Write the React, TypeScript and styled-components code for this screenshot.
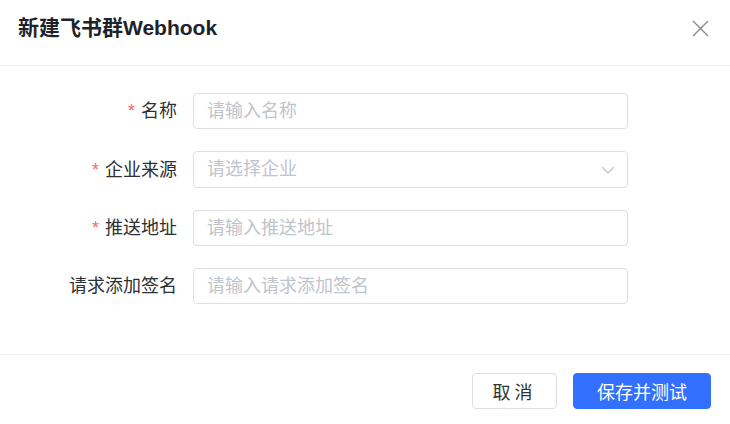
import React from "react";
import styled, { createGlobalStyle } from "styled-components";

const Global = createGlobalStyle`
  html, body { margin: 0; padding: 0; background: #fff; }
  body { font-family: "Liberation Sans", "Noto Sans CJK SC", sans-serif; }
  * { box-sizing: border-box; }
`;

const Dialog = styled.div`
  width: 730px;
  height: 424px;
  background: #fff;
  display: flex;
  flex-direction: column;
`;

const Header = styled.div`
  height: 66px;
  padding: 0 21px 9px 18px;
  display: flex;
  align-items: center;
  justify-content: space-between;
  border-bottom: 1px solid #ebedf0;
`;

const Title = styled.div`
  font-size: 21px;
  font-weight: 700;
  color: #1f2329;
  line-height: 24px;
`;

const Close = styled.button`
  width: 18px;
  height: 18px;
  padding: 0;
  border: none;
  background: transparent;
  display: flex;
  align-items: center;
  justify-content: center;
  color: #8a8a8a;
`;

const Body = styled.div`
  flex: 1;
  padding-top: 27px;
  display: flex;
  flex-direction: column;
  gap: 22px;
`;

const Row = styled.div`
  display: grid;
  grid-template-columns: 177px 435px;
  column-gap: 16px;
  align-items: center;
`;

const Label = styled.label`
  text-align: right;
  font-size: 18px;
  color: #2b2f36;
  line-height: 36px;
  white-space: nowrap;
`;

const Star = styled.span`
  color: #f56c6c;
  margin-right: 6px;
`;

const Field = styled.div<{ $h?: number }>`
  position: relative;
  height: ${(p) => p.$h ?? 36}px;
  border: 1px solid #dcdfe6;
  border-radius: 4px;
  display: flex;
  align-items: center;
  padding: 0 13px;
`;

const Input = styled.input`
  border: none;
  outline: none;
  width: 100%;
  padding: 0;
  font-family: inherit;
  font-size: 18px;
  color: #333;
  background: transparent;
  &::placeholder { color: #c0c4cc; }
`;

const Chevron = styled.svg`
  flex: none;
  margin-left: 8px;
  margin-right: -1px;
`;

const Footer = styled.div`
  height: 70px;
  border-top: 1px solid #ebedf0;
  padding: 18px 19px 0 0;
  display: flex;
  justify-content: flex-end;
  align-items: flex-start;
  gap: 16px;
`;

const Button = styled.button<{ $primary?: boolean; $w: number }>`
  width: ${(p) => p.$w}px;
  height: 36px;
  border-radius: 4px;
  font-family: inherit;
  font-size: 18px;
  cursor: pointer;
  border: 1px solid ${(p) => (p.$primary ? "#3370ff" : "#dcdfe6")};
  background: ${(p) => (p.$primary ? "#3370ff" : "#fff")};
  color: ${(p) => (p.$primary ? "#fff" : "#333")};
  letter-spacing: ${(p) => (p.$primary ? "0" : "4px")};
  padding: 0;
`;

const fields = [
  { label: "名称", required: true, placeholder: "请输入名称" },
  { label: "企业来源", required: true, placeholder: "请选择企业", select: true },
  { label: "推送地址", required: true, placeholder: "请输入推送地址" },
  { label: "请求添加签名", required: false, placeholder: "请输入请求添加签名" },
];

export default function App() {
  return (
    <>
      <Global />
      <Dialog>
        <Header>
          <Title>新建飞书群Webhook</Title>
          <Close aria-label="关闭">
            <svg width="17" height="17" viewBox="0 0 17 17">
              <path d="M1 1 L16 16 M16 1 L1 16" stroke="currentColor" strokeWidth="1.4" fill="none" />
            </svg>
          </Close>
        </Header>
        <Body>
          {fields.map((f) => (
            <Row key={f.label}>
              <Label>
                {f.required && <Star>*</Star>}
                {f.label}
              </Label>
              <Field $h={f.select ? 37 : 36}>
                <Input placeholder={f.placeholder} readOnly={f.select} />
                {f.select && (
                  <Chevron width="14" height="8" viewBox="0 0 14 8">
                    <path d="M1 1 L7 7 L13 1" stroke="#c0c4cc" strokeWidth="1.3" fill="none" />
                  </Chevron>
                )}
              </Field>
            </Row>
          ))}
        </Body>
        <Footer>
          <Button $w={85}>取消</Button>
          <Button $w={138} $primary>保存并测试</Button>
        </Footer>
      </Dialog>
    </>
  );
}
